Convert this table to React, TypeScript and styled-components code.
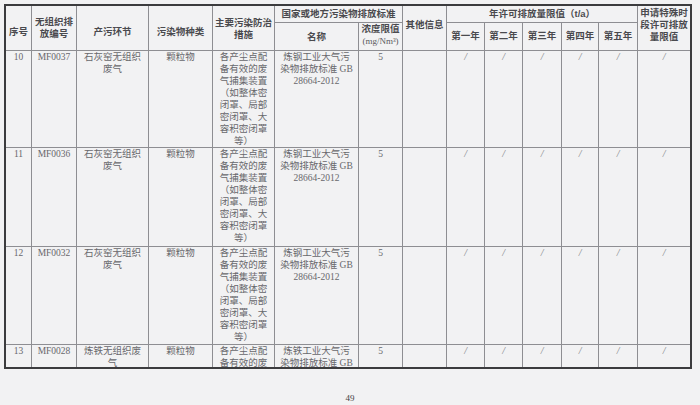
import React from "react";
import styled, { createGlobalStyle } from "styled-components";

const Global = createGlobalStyle`
  html, body { margin: 0; padding: 0; }
  body {
    background: #f2f2f3;
    width: 700px;
    height: 405px;
    overflow: hidden;
  }
`;

const Page = styled.div`
  padding: 4px 0 0 4px;
  display: flex;
  flex-direction: column;
`;

const Sheet = styled.table`
  border-collapse: separate;
  border-spacing: 0;
  table-layout: fixed;
  width: 688px;
  border: 2px solid #3c3c3e;
  box-sizing: border-box;
`;

const Col = styled.col<{ $w: number }>`
  width: ${(p) => p.$w}px;
`;

const Row = styled.tr<{ $h: number }>`
  height: ${(p) => p.$h}px;
`;

const Head = styled.th<{ $top?: number; $bottom?: number; $last?: boolean }>`
  box-sizing: border-box;
  padding: ${(p) => p.$top ?? 0}px 1px ${(p) => p.$bottom ?? 0}px;
  border-right: ${(p) => (p.$last ? "none" : "1px solid #8e8e92")};
  border-bottom: 1px solid #8e8e92;
  font-family: "Liberation Sans", "Noto Sans CJK SC", sans-serif;
  font-weight: 700;
  font-size: 9.5px;
  line-height: 12px;
  color: #4a4a4e;
  text-align: center;
  vertical-align: middle;
  white-space: nowrap;
  overflow: hidden;
`;

const Unit = styled.span`
  display: block;
  font-family: "Liberation Serif", "Noto Sans CJK SC", serif;
  font-weight: 400;
  font-size: 9px;
  line-height: 13px;
  color: #5a5a5e;
`;

const Line = styled.span`
  display: block;
`;

const Cell = styled.td<{ $last?: boolean; $lastRow?: boolean }>`
  box-sizing: border-box;
  padding: 0 1px;
  border-right: ${(p) => (p.$last ? "none" : "1px solid #8e8e92")};
  border-bottom: ${(p) => (p.$lastRow ? "none" : "1px solid #8e8e92")};
  vertical-align: top;
  text-align: center;
  overflow: hidden;
`;

const CellBody = styled.div<{ $h: number }>`
  height: ${(p) => p.$h}px;
  overflow: hidden;
  font-family: "Liberation Serif", "Noto Sans CJK SC", serif;
  font-size: 9.5px;
  line-height: 12px;
  color: #68686c;
  white-space: nowrap;
`;

const Slash = styled.span`
  font-family: "Liberation Serif", serif;
  font-style: italic;
  font-size: 10px;
  color: #7a7a7e;
`;

const PageNo = styled.div`
  width: 700px;
  margin-left: -4px;
  margin-top: 24px;
  text-align: center;
  font-family: "Liberation Serif", serif;
  font-size: 9px;
  color: #444;
`;

const widths = [26, 45, 72, 64, 62, 84, 44, 44, 38, 38, 39, 37, 39, 52];

const measures = [
  "各产尘点配",
  "备有效的废",
  "气捕集装置",
  "（如整体密",
  "闭罩、局部",
  "密闭罩、大",
  "容积密闭罩",
  "等）",
];

type RowData = {
  no: string;
  code: string;
  source: string[];
  kind: string;
  measure: string[];
  std: string[];
  limit: string;
};

const rows: RowData[] = [
  {
    no: "10",
    code: "MF0037",
    source: ["石灰窑无组织", "废气"],
    kind: "颗粒物",
    measure: measures,
    std: ["炼钢工业大气污", "染物排放标准 GB", "28664-2012"],
    limit: "5",
  },
  {
    no: "11",
    code: "MF0036",
    source: ["石灰窑无组织", "废气"],
    kind: "颗粒物",
    measure: measures,
    std: ["炼钢工业大气污", "染物排放标准 GB", "28664-2012"],
    limit: "5",
  },
  {
    no: "12",
    code: "MF0032",
    source: ["石灰窑无组织", "废气"],
    kind: "颗粒物",
    measure: measures,
    std: ["炼钢工业大气污", "染物排放标准 GB", "28664-2012"],
    limit: "5",
  },
  {
    no: "13",
    code: "MF0028",
    source: ["炼铁无组织废", "气"],
    kind: "颗粒物",
    measure: ["各产尘点配", "备有效的废"],
    std: ["炼铁工业大气污", "染物排放标准 GB"],
    limit: "5",
  },
];

const rowHeights = [97, 99, 98, 22];

const Lines = ({ items }: { items: string[] }) => (
  <>
    {items.map((t, i) => (
      <Line key={i}>{t}</Line>
    ))}
  </>
);

export default function App() {
  return (
    <>
      <Global />
      <Page>
        <Sheet>
          <colgroup>
            {widths.map((w, i) => (
              <Col key={i} $w={w} />
            ))}
          </colgroup>
          <thead>
            <Row $h={17}>
              <Head rowSpan={2} $top={8}>序号</Head>
              <Head rowSpan={2}>
                <Line>无组织排</Line>
                <Line>放编号</Line>
              </Head>
              <Head rowSpan={2} $top={8}>产污环节</Head>
              <Head rowSpan={2} $top={8}>污染物种类</Head>
              <Head rowSpan={2} $top={2}>
                <Line>主要污染防治</Line>
                <Line>措施</Line>
              </Head>
              <Head colSpan={2}>国家或地方污染物排放标准</Head>
              <Head rowSpan={2} $bottom={6}>其他信息</Head>
              <Head colSpan={5}>年许可排放量限值（t/a）</Head>
              <Head rowSpan={2} $last $bottom={6}>
                <Line>申请特殊时</Line>
                <Line>段许可排放</Line>
                <Line>量限值</Line>
              </Head>
            </Row>
            <Row $h={28}>
              <Head>名称</Head>
              <Head $bottom={2}>
                <Line>浓度限值</Line>
                <Unit>(mg/Nm³)</Unit>
              </Head>
              <Head $bottom={2}>第一年</Head>
              <Head $bottom={2}>第二年</Head>
              <Head $bottom={2}>第三年</Head>
              <Head $bottom={2}>第四年</Head>
              <Head $bottom={2}>第五年</Head>
            </Row>
          </thead>
          <tbody>
            {rows.map((r, i) => {
              const h = rowHeights[i];
              const lastRow = i === rows.length - 1;
              const inner = lastRow ? h : h - 1;
              return (
                <Row key={r.no} $h={h}>
                  <Cell $lastRow={lastRow}>
                    <CellBody $h={inner}>{r.no}</CellBody>
                  </Cell>
                  <Cell $lastRow={lastRow}>
                    <CellBody $h={inner}>{r.code}</CellBody>
                  </Cell>
                  <Cell $lastRow={lastRow}>
                    <CellBody $h={inner}>
                      <Lines items={r.source} />
                    </CellBody>
                  </Cell>
                  <Cell $lastRow={lastRow}>
                    <CellBody $h={inner}>{r.kind}</CellBody>
                  </Cell>
                  <Cell $lastRow={lastRow}>
                    <CellBody $h={inner}>
                      <Lines items={r.measure} />
                    </CellBody>
                  </Cell>
                  <Cell $lastRow={lastRow}>
                    <CellBody $h={inner}>
                      <Lines items={r.std} />
                    </CellBody>
                  </Cell>
                  <Cell $lastRow={lastRow}>
                    <CellBody $h={inner}>{r.limit}</CellBody>
                  </Cell>
                  <Cell $lastRow={lastRow}>
                    <CellBody $h={inner} />
                  </Cell>
                  {[0, 1, 2, 3, 4, 5].map((k) => (
                    <Cell key={k} $lastRow={lastRow} $last={k === 5}>
                      <CellBody $h={inner}>
                        <Slash>/</Slash>
                      </CellBody>
                    </Cell>
                  ))}
                </Row>
              );
            })}
          </tbody>
        </Sheet>
        <PageNo>49</PageNo>
      </Page>
    </>
  );
}
